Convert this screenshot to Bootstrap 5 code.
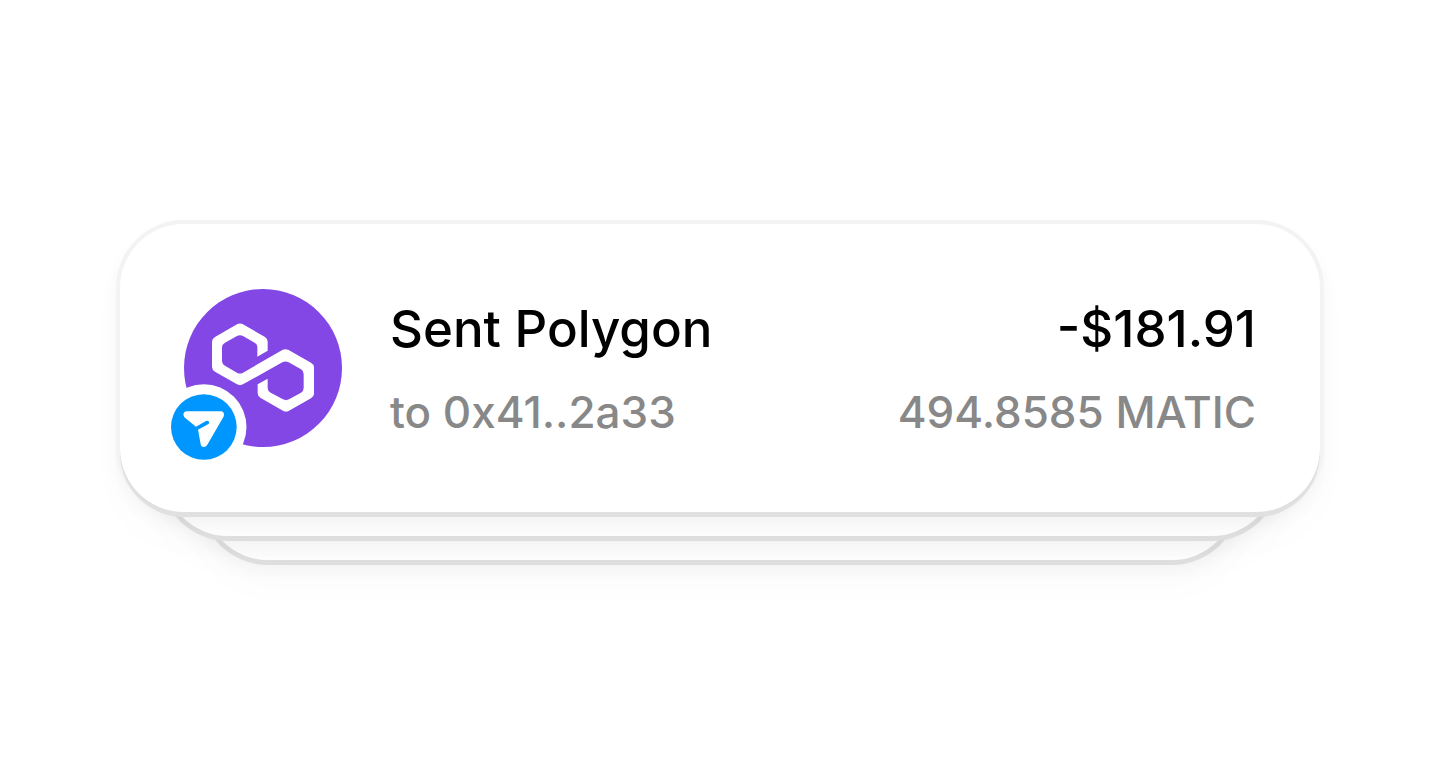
<!DOCTYPE html>
<html lang="en">
<head>
<meta charset="utf-8">
<meta name="viewport" content="width=device-width, initial-scale=1">
<title>Transaction</title>
<link href="https://cdn.jsdelivr.net/npm/bootstrap@5.3.0/dist/css/bootstrap.min.css" rel="stylesheet">
<style>
  body { font-family: Inter, "Liberation Sans", sans-serif; background: #fff; color: #000; }
  .stage { padding: 0 120px; }
  .stack { padding-bottom: 44px; isolation: isolate; }
  .tile {
    border-radius: 64px;
    background: #fff;
    box-shadow: 0 1px 0 4px #e0e0e0, 0 8px 20px rgba(0, 0, 0, .04), 0 24px 40px rgba(0, 0, 0, .02);
  }
  .tile-front {
    padding: 59px 64px;
    gap: 48px;
    box-shadow: 0 5px 0 0 #e0e0e0, 0 0 0 4px #f3f3f3, 0 8px 20px rgba(0, 0, 0, .05), 0 24px 48px rgba(0, 0, 0, .02);
  }
  .layer { height: 200px; }
  .layer-mid { left: 44px; right: 44px; bottom: 20px; z-index: -1; }
  .layer-back { left: 84px; right: 84px; bottom: -4px; z-index: -2; }
  .token { width: 158px; height: 158px; }
  .token-badge { width: 86px; height: 86px; left: -23px; bottom: -23px; }
  .details { padding-top: 4px; }
  .line-main { font-size: 51px; line-height: 84px; font-weight: 500; }
  .line-sub { font-size: 44px; line-height: 82px; font-weight: 500; color: #888; }
</style>
</head>
<body>
<main class="stage container-fluid min-vh-100 d-flex align-items-center">
  <div class="stack position-relative w-100">
    <div class="tile layer layer-mid position-absolute"></div>
    <div class="tile layer layer-back position-absolute"></div>
    <article class="tile tile-front d-flex align-items-center">
      <div class="token position-relative flex-shrink-0">
        <svg class="d-block w-100 h-100" viewBox="72 27 474 474" role="img" aria-label="Polygon">
          <circle cx="309" cy="264" r="237" fill="#8247e5"/>
          <path fill="#fff" d="M231 133Q240 128 249 133L315 171Q323 176 323 185V212L292 230V200Q292 192 284 188L249 168Q240 163 231 168L195 188Q186 193 186 202V244Q186 252 195 257L231 278Q240 283 249 278L367 210Q376 205 386 210L453 248Q462 253 462 262V341Q462 350 453 355L387 392Q378 397 369 392L302 354Q293 349 293 340V313L323 296V325Q323 333 332 338L369 358Q378 363 387 358L423 338Q431 333 431 324V282Q431 273 423 268L386 247Q376 242 367 247L249 313Q240 318 231 313L165 275Q156 270 156 261V185Q156 176 165 171Z"/>
        </svg>
        <svg class="token-badge position-absolute" viewBox="3 312 258 258" aria-hidden="true">
          <circle cx="131.500" cy="441" r="128" fill="#fff"/>
          <circle cx="131.500" cy="441" r="98.500" fill="#0096ff"/>
          <path fill="#fff" d="M80 394H183Q192 395 192 405Q192 409 188 415L142 494Q138 501 131 501Q123 501 122 492L114 449L144 433Q149 430 147 425Q144 420 138 423L108 440L73 412Q68 407 71 399Q74 394 80 394Z"/>
        </svg>
      </div>
      <div class="details d-flex flex-grow-1 justify-content-between text-nowrap">
        <div>
          <div class="line-main">Sent Polygon</div>
          <div class="line-sub">to 0x41..2a33</div>
        </div>
        <div class="text-end">
          <div class="line-main">-$181.91</div>
          <div class="line-sub">494.8585 MATIC</div>
        </div>
      </div>
    </article>
  </div>
</main>
<script src="https://cdn.jsdelivr.net/npm/bootstrap@5.3.0/dist/js/bootstrap.bundle.min.js"></script>
</body>
</html>
